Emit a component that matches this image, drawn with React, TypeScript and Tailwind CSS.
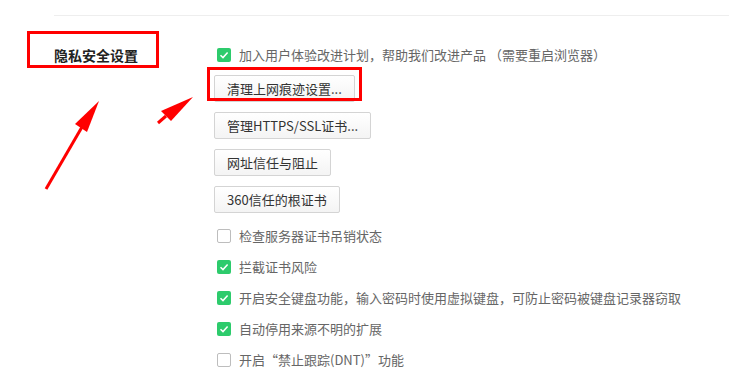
import React from 'react'

const font = { fontFamily: '"Noto Sans CJK SC", "Noto Sans", sans-serif' }

function Check({ on }: { on: boolean }) {
  return on ? (
    <span className="flex h-[14px] w-[14px] items-center justify-center rounded-[2px] bg-[#2dcb6c]">
      <svg width="10" height="10" viewBox="0 0 10 10">
        <path d="M1.5 5.2 L4 7.6 L8.6 2.6" fill="none" stroke="#fff" strokeWidth="1.5" />
      </svg>
    </span>
  ) : (
    <span className="h-[14px] w-[14px] rounded-[2px] border border-[#bdbdbd] bg-white" />
  )
}

function CheckRow({ on, label, className = 'h-[31px]' }: { on: boolean; label: string; className?: string }) {
  return (
    <div className={`flex items-center gap-[8px] ${className}`}>
      <Check on={on} />
      <span className="text-[13px] text-[#666]">{label}</span>
    </div>
  )
}

function Btn({ label }: { label: string }) {
  return (
    <button className="flex h-[27px] items-center rounded-[2px] border border-[#d4d4d4] bg-gradient-to-b from-white to-[#f4f4f4] px-[12px] text-[13px] text-[#333]">
      {label}
    </button>
  )
}

export default function App() {
  return (
    <div className="relative h-[384px] w-[729px] overflow-hidden bg-white" style={font}>
      <div className="ml-[54px] mt-[15px] h-px bg-[#eeeeee]" />

      <div className="flex">
        {/* Section label */}
        <div className="relative ml-[54px] w-[163px] pt-[29px]">
          <div className="flex h-[20px] items-center text-[14px] font-bold text-[#222]">隐私安全设置</div>
          <div className="absolute left-[-27px] top-[15px] h-[37px] w-[132px] border-[3px] border-[#ff0000]" />
        </div>

        {/* Options */}
        <div className="flex flex-col items-start pt-[29px]">
          <CheckRow on label="加入用户体验改进计划，帮助我们改进产品 （需要重启浏览器）" className="h-[20px]" />
          <div className="-ml-[3px] mt-[10px] flex flex-col items-start gap-[10px]">
            <div className="relative">
              <Btn label="清理上网痕迹设置..." />
              <div className="absolute left-[-7px] top-[-8px] h-[34px] w-[155px] border-[3px] border-[#ff0000]" />
            </div>
            <Btn label="管理HTTPS/SSL证书..." />
            <Btn label="网址信任与阻止" />
            <Btn label="360信任的根证书" />
          </div>
          <div className="mt-[7px]">
            <CheckRow on={false} label="检查服务器证书吊销状态" />
            <CheckRow on label="拦截证书风险" />
            <CheckRow on label="开启安全键盘功能，输入密码时使用虚拟键盘，可防止密码被键盘记录器窃取" />
            <CheckRow on label="自动停用来源不明的扩展" />
            <CheckRow on={false} label="开启“禁止跟踪(DNT)”功能" />
          </div>
        </div>
      </div>

      {/* Annotation arrows */}
      <svg className="pointer-events-none absolute left-0 top-0" width="729" height="384">
        <line x1="46" y1="189" x2="82" y2="127" stroke="#ff0000" strokeWidth="3" />
        <polygon points="99,101 75,124 87,132" fill="#ff0000" />
        <line x1="158" y1="123" x2="166" y2="116" stroke="#ff0000" strokeWidth="3" />
        <polygon points="193,97 161,111 171,121" fill="#ff0000" />
      </svg>
    </div>
  )
}
